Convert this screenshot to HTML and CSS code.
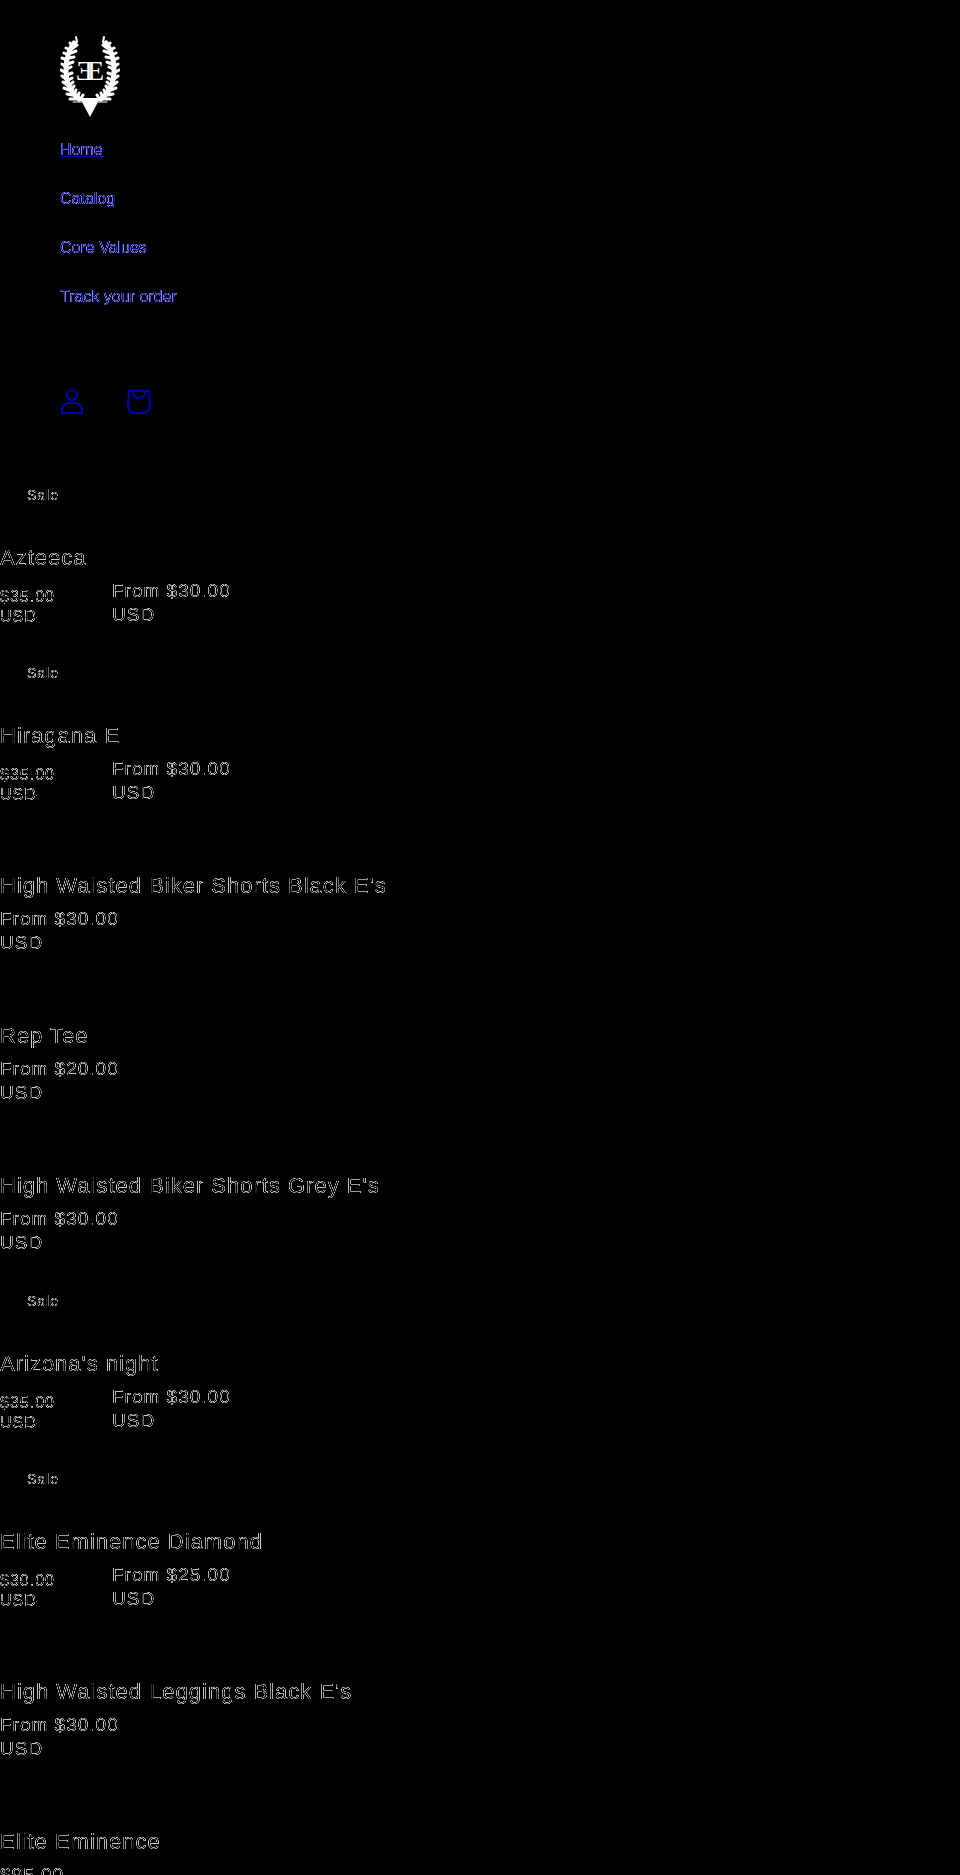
FILE: index.html
```html
<!DOCTYPE html>
<html lang="en">
<head>
    <meta charset="utf-8">
    <title>Elite Eminence</title>
    <link rel="stylesheet" href="styles.css">
</head>
<body>
    <!-- Text filters: keep only the soft edge of each glyph -->
    <svg class="filters" aria-hidden="true">
        <filter id="edge" color-interpolation-filters="sRGB">
            <feColorMatrix values="0 0 0 1 0  0 0 0 1 0  0 0 0 1 0  0 0 0 0 1"/>
            <feComponentTransfer>
                <feFuncR type="table" tableValues="0 .6 .8 .6 0"/>
                <feFuncG type="table" tableValues="0 .6 .8 .6 0"/>
                <feFuncB type="table" tableValues="0 .6 .8 .6 0"/>
            </feComponentTransfer>
        </filter>
        <filter id="link-edge" color-interpolation-filters="sRGB">
            <feColorMatrix values="0 0 0 1 0  0 0 0 1 0  0 0 0 1 0  0 0 0 0 1"/>
            <feComponentTransfer>
                <feFuncR type="table" tableValues="0 .4 .6 .3 0"/>
                <feFuncG type="table" tableValues="0 .4 .6 .3 0"/>
                <feFuncB type="table" tableValues="0 .7 .9 .8 .6"/>
            </feComponentTransfer>
        </filter>
    </svg>

    <header class="header">
        <a href="#" class="logo" aria-label="Elite Eminence">
            <svg width="60" height="82" viewBox="0 0 60 82" fill="#fff">
                <g id="branch" fill="none" stroke="#fff" stroke-linecap="round">
                    <path stroke-width="5" d="M14 8C8 16 6 24 6 35C6 48 10 57 19 64"/>
                    <path stroke-width="2" d="M16 2l1 5-3 4"/>
                    <path stroke-width="3" d="M12 11l-2-3M13 13l4-3M10 15l-4-2M11 18l5-2M8 20l-4-2M9 23l5-1M7 25l-5-2M8 29l5-2M6 32l-4-3M7 34l4-2M6 38l-5-3M7 40l5-2M6 44l-4-3M7 46l5-3M7 50l-4-3M9 51l4-4M9 55l-5-2M11 56l3-5M12 60l-5-1M14 60l2-5M15 64l-5 0M17 64l2-6M20 65l3-5"/>
                    <path stroke-width="1" d="M13 67h9"/>
                </g>
                <use href="#branch" transform="matrix(-1 0 0 1 60 0)"/>
                <path d="M21 65l2-2h14l2 2-9 17z"/>
                <text class="monogram" x="27" y="45">E</text>
                <text class="monogram" x="27" y="45" transform="matrix(-1 0 0 1 60 0)">E</text>
            </svg>
        </a>
        <nav>
            <ul class="menu">
                <li><a href="#" class="menu-link active">Home</a></li>
                <li><a href="#" class="menu-link">Catalog</a></li>
                <li><a href="#" class="menu-link">Core Values</a></li>
                <li><a href="#" class="menu-link">Track your order</a></li>
            </ul>
        </nav>
        <div class="icons">
            <a href="#" class="icon" aria-label="Log in">
                <svg width="24" height="26" viewBox="0 0 24 26">
                    <circle cx="12" cy="6" r="5"/>
                    <path d="M2 24v-3c0-4 3-7 7-7h6c4 0 7 3 7 7v3z"/>
                </svg>
            </a>
            <a href="#" class="icon" aria-label="Cart">
                <svg width="24" height="26" viewBox="0 0 24 26">
                    <path d="M2 2h20l1 15c0 4-3 7-7 7H8c-4 0-7-3-7-7z"/>
                    <path d="M6 2c0 5 2 7 6 7s6-2 6-7"/>
                </svg>
            </a>
        </div>
    </header>

    <main class="products">
        <article class="card">
            <span class="badge">Sale</span>
            <h3 class="title">Azteeca</h3>
            <div class="price"><s>$35.00 USD</s><span>From $30.00 USD</span></div>
        </article>
        <article class="card">
            <span class="badge">Sale</span>
            <h3 class="title">Hiragana E</h3>
            <div class="price"><s>$35.00 USD</s><span>From $30.00 USD</span></div>
        </article>
        <article class="card">
            <h3 class="title">High Waisted Biker Shorts Black E's</h3>
            <div class="price"><span>From $30.00 USD</span></div>
        </article>
        <article class="card">
            <h3 class="title">Rep Tee</h3>
            <div class="price"><span>From $20.00 USD</span></div>
        </article>
        <article class="card">
            <h3 class="title">High Waisted Biker Shorts Grey E's</h3>
            <div class="price"><span>From $30.00 USD</span></div>
        </article>
        <article class="card">
            <span class="badge">Sale</span>
            <h3 class="title">Arizona's night</h3>
            <div class="price"><s>$35.00 USD</s><span>From $30.00 USD</span></div>
        </article>
        <article class="card">
            <span class="badge">Sale</span>
            <h3 class="title">Elite Eminence Diamond</h3>
            <div class="price"><s>$30.00 USD</s><span>From $25.00 USD</span></div>
        </article>
        <article class="card">
            <h3 class="title">High Waisted Leggings Black E's</h3>
            <div class="price"><span>From $30.00 USD</span></div>
        </article>
        <article class="card">
            <h3 class="title">Elite Eminence</h3>
            <div class="price"><span>$95.00</span></div>
        </article>
    </main>
</body>
</html>
```
FILE: styles.css
```css
body {
    margin: 0;
    height: 100vh;
    overflow: hidden;
    background: #000;
    color: #000;
    font-family: "Liberation Sans", Arial, sans-serif;
}
.filters {
    display: block;
    width: 0;
    height: 0;
}
.header {
    padding: 35px 60px 0;
}
.logo {
    display: block;
    width: 60px;
}
.logo svg {
    display: block;
}
.monogram {
    font-family: "Liberation Serif", "Times New Roman", serif;
    font-size: 28px;
}
.menu {
    list-style: none;
    margin: 21px 0 0;
    padding: 0;
}
.menu li {
    height: 49px;
}
.menu-link {
    display: inline-block;
    color: #00e;
    font-size: 16px;
    line-height: 24px;
    text-decoration: none;
    filter: url(#link-edge);
}
.menu-link.active {
    text-decoration: underline;
}
.icons {
    display: flex;
    gap: 43px;
    margin-top: 55px;
}
.icon svg {
    display: block;
    fill: none;
    stroke: #0000b4;
    stroke-width: 2;
}
.products {
    padding-top: 68px;
}
.card {
    padding: 34px 0;
}
.card:has(.badge) {
    padding-top: 0;
}
.badge {
    display: block;
    width: 60px;
    margin-bottom: 38px;
    padding: 0 27px;
    font-size: 14px;
    line-height: 24px;
    letter-spacing: 1px;
    filter: url(#edge);
}
.title {
    width: fit-content;
    margin: 0;
    padding-right: 40px;
    font-size: 22px;
    font-weight: 400;
    line-height: 26px;
    letter-spacing: 1px;
    filter: url(#edge);
}
.price {
    display: flex;
    align-items: flex-end;
    margin-top: 8px;
}
.price span {
    width: 128px;
    font-size: 19px;
    line-height: 24px;
    letter-spacing: 1px;
    filter: url(#edge);
}
.price s {
    width: 72px;
    margin-right: 40px;
    font-size: 16px;
    line-height: 20px;
    letter-spacing: 1px;
    filter: url(#edge);
}
```
